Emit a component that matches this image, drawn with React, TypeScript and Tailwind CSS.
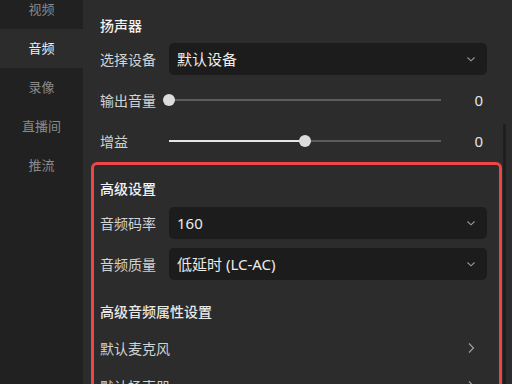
import React from 'react';

const font = { fontFamily: '"Noto Sans", "Noto Sans CJK SC", sans-serif' };

const navItems = ['视频', '音频', '录像', '直播间', '推流'];

function ChevronDown() {
  return (
    <svg width="10" height="10" viewBox="0 0 10 10" fill="none" stroke="#9a9a9a" strokeWidth="1.1">
      <path d="M1.5 3.5 5 6.8 8.5 3.5" />
    </svg>
  );
}

function ChevronRight() {
  return (
    <svg width="10" height="12" viewBox="0 0 10 12" fill="none" stroke="#a0a0a0" strokeWidth="1.2">
      <path d="M3 1.5 7.5 6 3 10.5" />
    </svg>
  );
}

function SelectRow({ label, value }: { label: string; value: string }) {
  return (
    <div className="flex items-center h-8">
      <span className="w-[69px] shrink-0 text-[14px] text-[#d2d2d2]">{label}</span>
      <div className="flex-1 h-8 rounded-[5px] bg-[#1c1c1c] flex items-center justify-between pl-2 pr-[11px]">
        <span className="text-[15px] text-[#ececec]">{value}</span>
        <ChevronDown />
      </div>
    </div>
  );
}

function SliderRow({ label, pct }: { label: string; pct: number }) {
  return (
    <div className="flex items-center h-8">
      <span className="w-[69px] shrink-0 text-[14px] text-[#d2d2d2]">{label}</span>
      <div className="flex-1 relative h-3 flex items-center">
        <div className="w-full h-[2px] bg-[#5c5c5c]" />
        <div className="absolute left-0 h-[2px] bg-[#e6e6e6]" style={{ width: `${pct}%` }} />
        <div
          className="absolute w-3 h-3 rounded-full bg-[#dcdcdc] -translate-x-1/2"
          style={{ left: `${pct}%` }}
        />
      </div>
      <span className="w-[46px] shrink-0 text-right pr-[4px] text-[15px] text-[#e6e6e6]">0</span>
    </div>
  );
}

function LinkRow({ label }: { label: string }) {
  return (
    <div className="flex items-center justify-between h-[38px] pr-[11px]">
      <span className="text-[14px] text-[#d2d2d2]">{label}</span>
      <ChevronRight />
    </div>
  );
}

export default function App() {
  return (
    <div className="w-[512px] h-[384px] flex overflow-hidden bg-[#2c2c2c] relative" style={font}>
      {/* sidebar */}
      <aside className="w-[83px] shrink-0 bg-[#212121] h-full">
        <div className="-mt-[10px] flex flex-col">
          {navItems.map((n) => (
            <div
              key={n}
              className={
                n === '音频'
                  ? 'h-[39px] flex items-center justify-center text-[13px] bg-[#2c2c2c] text-[#f0f0f0]'
                  : 'h-[39px] flex items-center justify-center text-[13px] text-[#8a8a8a]'
              }
            >
              {n}
            </div>
          ))}
        </div>
      </aside>

      {/* main */}
      <main className="flex-1 pl-2 pr-[10px] pt-4">
        <div className="pl-[9px] pr-[15px]">
          <div className="text-[14px] leading-5 font-medium text-[#f2f2f2]">扬声器</div>
          <div className="mt-[7px] flex flex-col gap-[9px]">
            <SelectRow label="选择设备" value="默认设备" />
            <SliderRow label="输出音量" pct={0} />
            <SliderRow label="增益" pct={50} />
          </div>
        </div>

        {/* highlighted advanced block */}
        <div className="mt-[5px] border-[3px] border-[#f04545] rounded-[6px] pl-[6px] pr-[12px] pt-[14px] pb-4">
          <div className="text-[14px] leading-5 font-medium text-[#f2f2f2]">高级设置</div>
          <div className="mt-2 flex flex-col gap-[9px]">
            <SelectRow label="音频码率" value="160" />
            <SelectRow label="音频质量" value="低延时 (LC-AC)" />
          </div>
          <div className="mt-[22px] text-[14px] leading-5 font-medium text-[#e8e8e8]">高级音频属性设置</div>
          <div className="mt-[7px] flex flex-col">
            <LinkRow label="默认麦克风" />
            <LinkRow label="默认扬声器" />
          </div>
        </div>
      </main>

      {/* scrollbar */}
      <div className="absolute right-[6px] top-[124px] bottom-0 w-[3px] rounded-full bg-[#1f1f1f]" />
    </div>
  );
}
